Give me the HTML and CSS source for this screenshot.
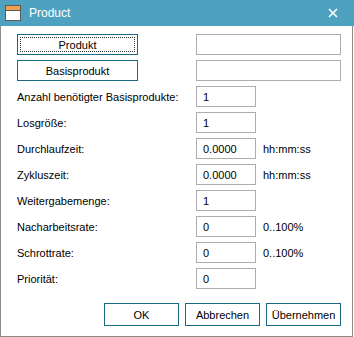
FILE: index.html
```html
<!DOCTYPE html>
<html lang="de">
<head>
    <meta charset="UTF-8">
    <title>Product</title>
    <link rel="stylesheet" href="styles.css">
</head>
<body>
    <div class="window">
        <div class="titlebar">
            <svg class="app-icon" width="16" height="16" viewBox="0 0 16 16">
                <rect x="0.5" y="0.5" width="15" height="15" fill="#fff" stroke="#5a5a5a"/>
                <rect x="1" y="1" width="14" height="4" fill="#f0a050"/>
                <line x1="1" y1="5.5" x2="15" y2="5.5" stroke="#5a5a5a"/>
            </svg>
            <span class="title">Product</span>
            <svg class="close" width="10" height="10" viewBox="0 0 10 10">
                <path d="M1 1 L9 9 M9 1 L1 9" stroke="#fff" stroke-width="1.6"/>
            </svg>
        </div>

        <div class="form">
            <button class="pick focused">Produkt</button>
            <input class="field wide" type="text" value="">

            <button class="pick">Basisprodukt</button>
            <input class="field wide" type="text" value="">

            <label>Anzahl benötigter Basisprodukte:</label>
            <input class="field" type="text" value="1">
            <span></span>

            <label>Losgröße:</label>
            <input class="field" type="text" value="1">
            <span></span>

            <label>Durchlaufzeit:</label>
            <input class="field" type="text" value="0.0000">
            <span class="unit">hh:mm:ss</span>

            <label>Zykluszeit:</label>
            <input class="field" type="text" value="0.0000">
            <span class="unit">hh:mm:ss</span>

            <label>Weitergabemenge:</label>
            <input class="field" type="text" value="1">
            <span></span>

            <label>Nacharbeitsrate:</label>
            <input class="field" type="text" value="0">
            <span class="unit">0..100%</span>

            <label>Schrottrate:</label>
            <input class="field" type="text" value="0">
            <span class="unit">0..100%</span>

            <label>Priorität:</label>
            <input class="field" type="text" value="0">
            <span></span>
        </div>

        <div class="actions">
            <button>OK</button>
            <button>Abbrechen</button>
            <button>Übernehmen</button>
        </div>
    </div>
</body>
</html>
```

FILE: styles.css
```css
body {
    margin: 0;
    background: #fff;
    font-family: "Liberation Sans", Arial, sans-serif;
    font-size: 11px;
    color: #000;
}
.window {
    box-sizing: border-box;
    width: 353px;
    height: 337px;
    border: 1px solid #8c8c8c;
    border-top: none;
    background: #fff;
}
.titlebar {
    display: flex;
    align-items: center;
    height: 26px;
    margin: 0 -2px 0 -1px;
    padding-left: 5px;
    background: #4ea2c0;
    color: #fff;
}
.app-icon {
    flex: none;
}
.title {
    margin-left: 8px;
    font-size: 12px;
}
.close {
    margin-left: auto;
    margin-right: 16px;
}
.form {
    display: grid;
    grid-template-columns: 179px 60px 1fr;
    grid-auto-rows: 21px;
    row-gap: 5px;
    align-items: center;
    padding: 8px 11px 0 16px;
}
.form label {
    white-space: nowrap;
}
.field {
    box-sizing: border-box;
    width: 60px;
    height: 21px;
    margin: 0;
    padding: 0 6px;
    border: 1px solid #adadad;
    font: inherit;
    color: #000;
    background: #fff;
}
.field.wide {
    grid-column: 2 / 4;
    width: 145px;
}
.unit {
    padding-left: 7px;
}
button {
    box-sizing: border-box;
    margin: 0;
    padding: 0;
    border: 1px solid #1b6a84;
    background: #fff;
    font: inherit;
    color: #000;
}
.pick {
    width: 121px;
    height: 21px;
}
.focused {
    outline: 1px dotted #333;
    outline-offset: -4px;
}
.actions {
    display: flex;
    justify-content: flex-end;
    gap: 6px;
    margin-top: 14px;
    padding-right: 11px;
}
.actions button {
    width: 75px;
    height: 23px;
}
```
